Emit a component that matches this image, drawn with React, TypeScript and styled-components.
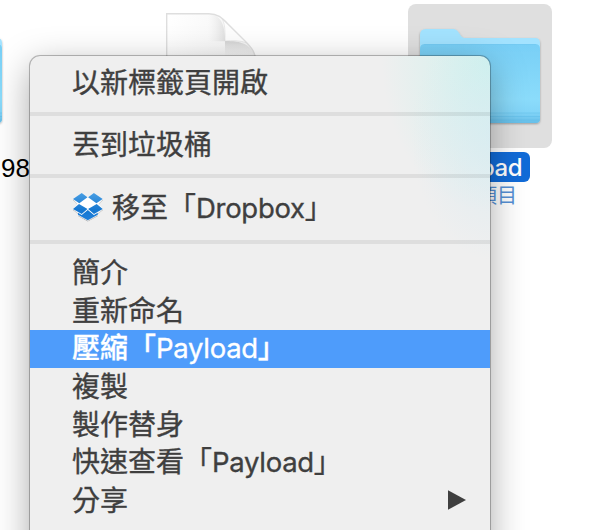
import React from "react";
import styled, { createGlobalStyle, css } from "styled-components";

const cjk = '"Noto Sans CJK TC", sans-serif';

const GlobalStyle = createGlobalStyle`
  html, body { margin: 0; padding: 0; overflow: hidden; background: #fff; }
`;

const Desktop = styled.main`
  position: relative;
  width: 616px;
  height: 530px;
  overflow: hidden;
  background: #fff;
`;

const DesktopItem = styled.div<{ $x: number; $y: number }>`
  position: absolute;
  left: ${(p) => p.$x}px;
  top: ${(p) => p.$y}px;
  display: flex;
  flex-direction: column;
  align-items: flex-end;
`;

const Selection = styled.div`
  width: 144px;
  height: 144px;
  border-radius: 8px;
  background: #dfdfdf;
`;

const FileName = styled.span<{ $selected?: boolean }>`
  box-sizing: border-box;
  height: 30px;
  color: #000;
  font: 400 26px/30px "Liberation Sans", Arial, sans-serif;
  white-space: nowrap;
  ${(p) =>
    p.$selected &&
    css`
      margin: 4px 22px 0 0;
      padding: 0 8px;
      border-radius: 6px;
      background: #116bd8;
      color: #fff;
      font: 500 24px/31px Inter, sans-serif;
      letter-spacing: -0.5px;
    `}
`;

const FileInfo = styled.span`
  margin-right: 35px;
  color: #5590d6;
  font: 400 20px/25px ${cjk};
`;

const Menu = styled.nav`
  position: absolute;
  left: 30px;
  top: 56px;
  box-sizing: border-box;
  width: 460px;
  height: 520px;
  padding-top: 8px;
  border-radius: 10px 10px 0 0;
  background:
    radial-gradient(ellipse 85px 125px at 466px 80px, rgba(212, 234, 243, 0.6), rgba(212, 234, 243, 0) 100%),
    radial-gradient(ellipse 108px 150px at 460px 5px, #cdf2ed, rgba(205, 242, 237, 0.45) 50%, rgba(205, 242, 237, 0) 100%),
    #efefef;
  box-shadow:
    0 0 0 1px rgba(0, 0, 0, 0.22),
    0 0 2px rgba(0, 0, 0, 0.2),
    0 10px 36px rgba(0, 0, 0, 0.34);
`;

const MenuRow = styled.div<{ $active?: boolean; $tall?: boolean }>`
  display: flex;
  align-items: center;
  box-sizing: border-box;
  height: ${(p) => (p.$tall ? 42 : 38)}px;
  padding: 0 24px 4px 42px;
  background: ${(p) => (p.$active ? "#4e9cfb" : "transparent")};
  color: ${(p) => (p.$active ? "#fff" : "#3f3f3f")};
  font: 400 28px/34px ${cjk};
  font-weight: ${(p) => (p.$active ? 500 : 400)};
  -webkit-text-stroke: 0.35px currentColor;
  white-space: nowrap;
`;

const Caption = styled.span`
  flex: 1;
`;

const Latin = styled.span`
  font-family: Inter, sans-serif;
  font-size: 27.5px;
  font-weight: 400;
  letter-spacing: -0.3px;
`;

const Separator = styled.div`
  height: 4px;
  margin: 10px 0;
  background: rgba(0, 0, 0, 0.07);
`;

const MenuIcon = styled.svg`
  width: 32px;
  height: 30px;
  margin-right: 8px;
`;

const Arrow = styled.svg`
  width: 18px;
  height: 20px;
  margin-top: 2px;
`;

const Graphic = styled.svg`
  display: block;
  overflow: visible;
`;

const Folder = ({ id }: { id: string }) => (
  <Graphic width="144" height="144" viewBox="0 0 144 144">
    <defs>
      <linearGradient id={id} x1="0" y1="0" x2="0" y2="1">
        <stop offset="0" stopColor="#78cff6" />
        <stop offset="0.7" stopColor="#8bdcfb" />
        <stop offset="0.86" stopColor="#83d5f8" />
        <stop offset="1" stopColor="#66bfe9" />
      </linearGradient>
      <filter id={`${id}-shade`} x="-10%" y="-10%" width="120%" height="125%">
        <feDropShadow dx="0" dy="1" stdDeviation="1.2" floodOpacity="0.3" />
      </filter>
    </defs>
    <g filter={`url(#${id}-shade)`}>
      <path d="M12 31q0-6 6-6h26c4 0 5 1 7 4 2 3 3 5 7 5h69q5 0 5 5v20H12z" fill="#a3e3ff" />
      <path d="M12 45q0-5 5-5h110q5 0 5 5v70q0 4-4 4H16q-4 0-4-4z" fill={`url(#${id})`} />
    </g>
    <path d="M16 40.5h112" stroke="#6bc4ed" opacity=".3" />
    <path d="M12 109h120M12 112.5h120M12 116h120" stroke="#54b6e4" strokeWidth="1" opacity=".35" />
  </Graphic>
);

const Paper = () => (
  <Graphic width="100" height="130" viewBox="0 0 100 130">
    <defs>
      <linearGradient id="page" x1="0" y1="0" x2="1" y2="0.4">
        <stop offset="0" stopColor="#fff" />
        <stop offset="1" stopColor="#f2f2f2" />
      </linearGradient>
      <linearGradient id="curl" x1="0" y1="0" x2="0" y2="1">
        <stop offset="0" stopColor="#d2d2d2" />
        <stop offset=".7" stopColor="#f2f2f2" stopOpacity="0" />
      </linearGradient>
      <linearGradient id="crease" x1="0" y1="0" x2="1" y2="0">
        <stop offset="0" stopColor="#eee" stopOpacity="0" />
        <stop offset="1" stopColor="#e0e0e0" />
      </linearGradient>
    </defs>
    <path
      d="M1.7 1.7h42c9 0 13 4 19 10l18 18c6 6 10 11 10 20v79h-89z"
      fill="url(#page)"
      stroke="#dedede"
      strokeWidth="1.4"
    />
    <path d="M43 2.2c12 0 17 9 17 27H43z" fill="url(#crease)" />
    <path d="M60 29c17 0 26 3 30.5 17v10H60z" fill="url(#curl)" />
    <path d="M57.5 7.5c3 6 2.5 15 2.5 21.5 7-.5 15-.5 21 1.5z" fill="#fdfdfd" stroke="#dedede" strokeWidth=".6" />
  </Graphic>
);

const DropboxIcon = () => (
  <MenuIcon viewBox="0 0 32 30">
    <defs>
      <linearGradient id="box" x1="0" y1="0" x2="0" y2="30" gradientUnits="userSpaceOnUse">
        <stop offset="0" stopColor="#4ba0e4" />
        <stop offset=".6" stopColor="#1677d0" />
        <stop offset="1" stopColor="#2080dc" />
      </linearGradient>
      <filter id="box-shade" x="-10%" y="-10%" width="120%" height="130%">
        <feDropShadow dx="0" dy=".8" stdDeviation=".5" floodOpacity=".3" />
      </filter>
    </defs>
    <g filter="url(#box-shade)">
      <path d="M9.5 1 15.8 5 22 1 31 7 26.500 12 31 17 26 21v2L15.800 28.500 6 23v-2L1 17l4.500-5L1 7z" fill="#fff" />
      <path
        d="M9.700 1 15.500 5.300 7.300 11.300 1 6.900zM21.900 1 30.700 6.900 24.400 11.300 16.100 5.300zM7 12 15.500 17.100 9.700 22 1 16.900zM24.700 12 30.700 16.900 22 22 16.100 17.100zM15.800 18 21.900 23 25.800 20.800v1.900L15.800 28.300 6 22.700v-1.900L9.700 23z"
        fill="url(#box)"
      />
    </g>
  </MenuIcon>
);

export default function App() {
  return (
    <>
      <GlobalStyle />
      <Desktop>
        <DesktopItem $x={-130} $y={4}>
          <Folder id="left-folder" />
        </DesktopItem>
        <DesktopItem $x={1} $y={153}>
          <FileName>98</FileName>
        </DesktopItem>
        <DesktopItem $x={165} $y={12}>
          <Paper />
        </DesktopItem>
        <DesktopItem $x={408} $y={4}>
          <Selection>
            <Folder id="payload-folder" />
          </Selection>
          <FileName $selected>Payload</FileName>
          <FileInfo>1 個項目</FileInfo>
        </DesktopItem>

        <Menu>
          <MenuRow>以新標籤頁開啟</MenuRow>
          <Separator />
          <MenuRow>丟到垃圾桶</MenuRow>
          <Separator />
          <MenuRow $tall>
            <DropboxIcon />
            <Caption>移至「<Latin>Dropbox</Latin>」</Caption>
          </MenuRow>
          <Separator />
          <MenuRow>簡介</MenuRow>
          <MenuRow>重新命名</MenuRow>
          <MenuRow $active>
            <Caption>壓縮「<Latin>Payload</Latin>」</Caption>
          </MenuRow>
          <MenuRow>複製</MenuRow>
          <MenuRow>製作替身</MenuRow>
          <MenuRow>
            <Caption>快速查看「<Latin>Payload</Latin>」</Caption>
          </MenuRow>
          <MenuRow>
            <Caption>分享</Caption>
            <Arrow viewBox="0 0 18 20">
              <path d="M0 0.3 18 10 0 19.7z" fill="#3f3f3f" />
            </Arrow>
          </MenuRow>
        </Menu>
      </Desktop>
    </>
  );
}
